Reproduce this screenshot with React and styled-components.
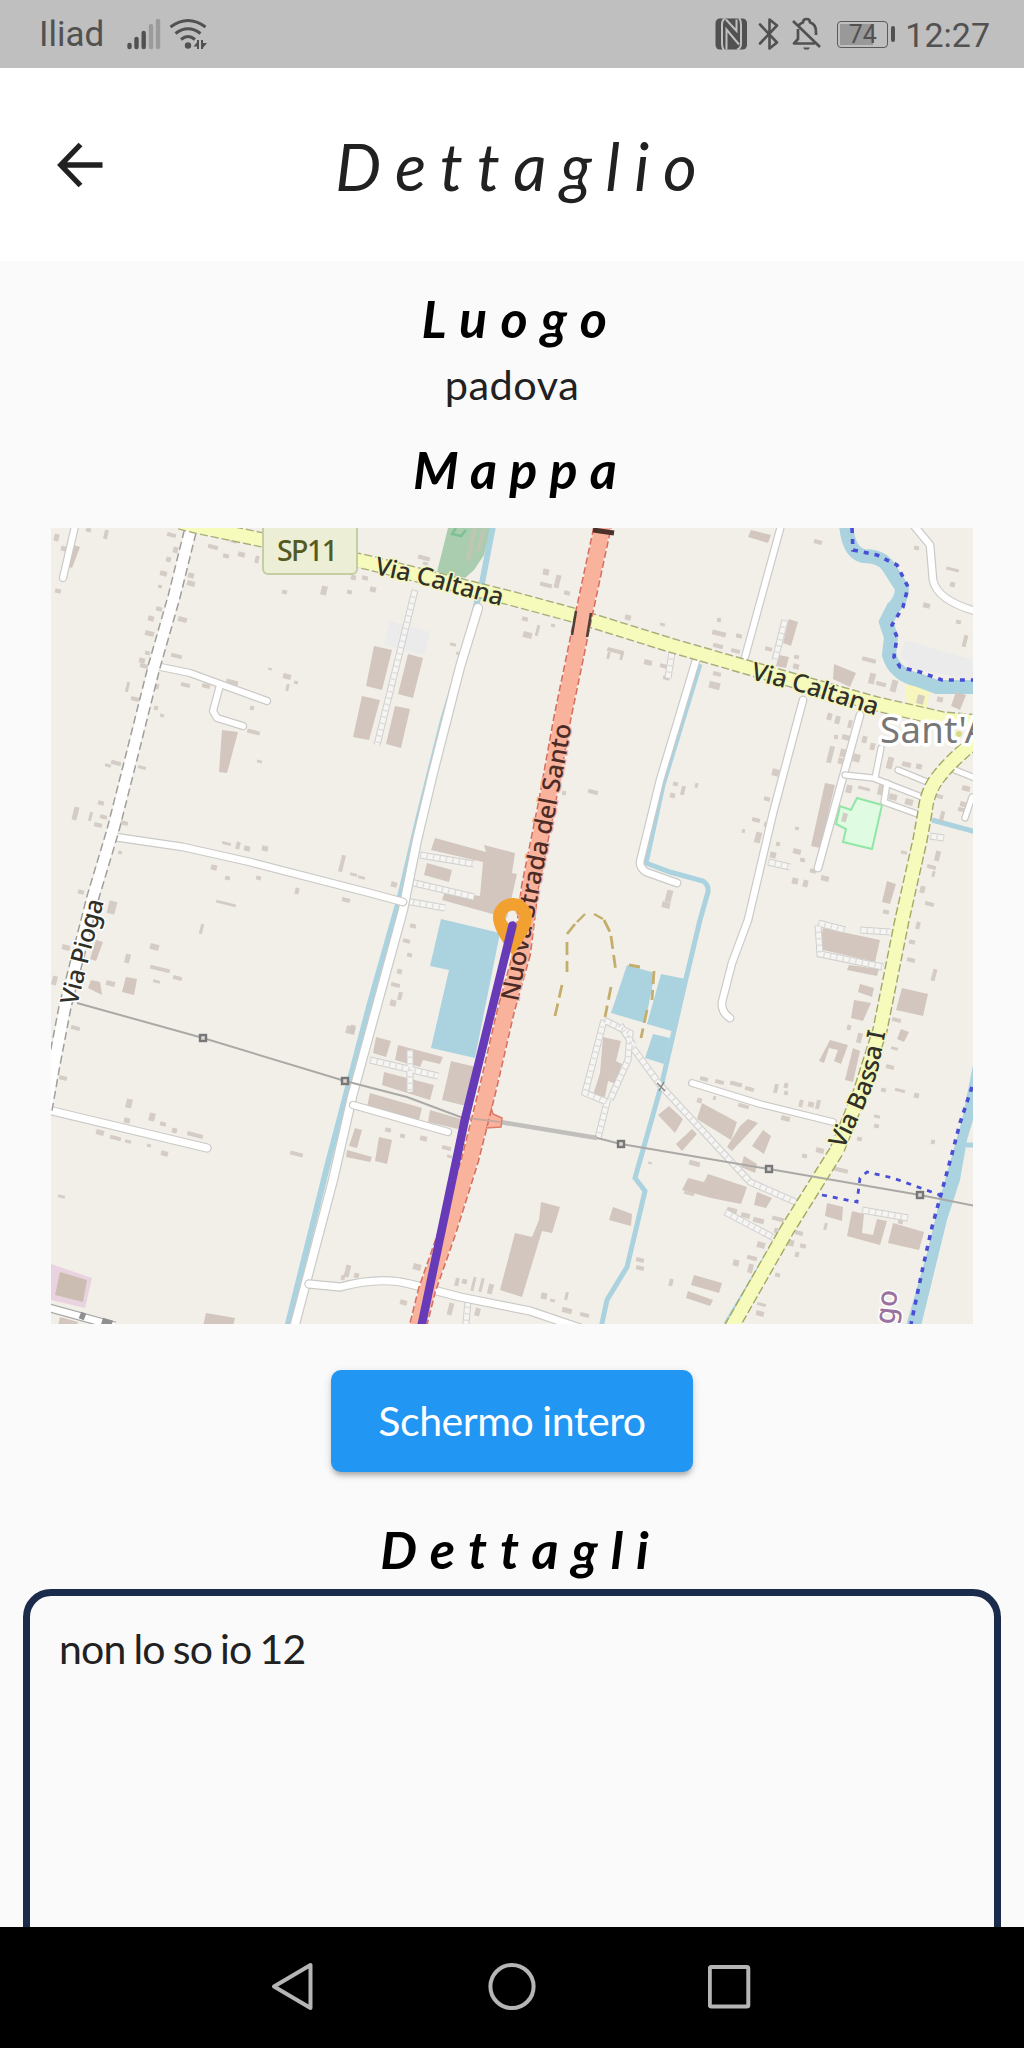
import React from "react";
import styled, { createGlobalStyle } from "styled-components";

const Global = createGlobalStyle`
  * { box-sizing: border-box; }
  html, body { margin: 0; padding: 0; background: #fafafa; }
  body { font-family: Lato, "Liberation Sans", sans-serif; color: #212121; }
  svg { display: block; flex: none; }
`;

const Screen = styled.div`
  width: 1024px;
  height: 2048px;
  overflow: hidden;
  display: flex;
  flex-direction: column;
  background: #fafafa;
`;

const StatusBar = styled.header`
  flex: none;
  height: 68px;
  padding: 0 34px 0 39px;
  display: flex;
  align-items: center;
  justify-content: space-between;
  background: #bfbfbf;
  color: #515151;
  font-family: Roboto, "Liberation Sans", sans-serif;
  font-size: 34px;
`;

const StatusGroup = styled.div`
  display: flex;
  align-items: center;
  gap: ${(p) => p.$gap}px;
`;

const StatusText = styled.span`
  line-height: 68px;
  padding-top: 2px;
  width: ${(p) => (p.$width ? `${p.$width}px` : "auto")};
  font-size: ${(p) => p.$size || 34}px;
  letter-spacing: ${(p) => p.$spacing || 0}px;
  white-space: nowrap;
`;

const AppBar = styled.div`
  flex: none;
  height: 193px;
  padding: 2px 48px 0 54px;
  display: grid;
  grid-template-columns: 60px 1fr 60px;
  align-items: center;
  background: #ffffff;
`;

const BackButton = styled.button`
  padding: 0 0 2px;
  border: 0;
  background: none;
  width: 52px;
`;

const Title = styled.h1`
  margin: 0;
  padding-left: 16px;
  text-align: center;
  white-space: nowrap;
  font-size: 65px;
  line-height: 78px;
  font-style: italic;
  font-weight: 400;
  letter-spacing: 13.9px;
`;

const Content = styled.main`
  flex: 1;
  min-height: 0;
  overflow: hidden;
  display: flex;
  flex-direction: column;
  align-items: center;
  padding-top: 26px;
`;

const Heading = styled.h2`
  flex: none;
  margin: ${(p) => p.$top || 0}px 0 0;
  padding-left: 18px;
  color: #000;
  font-size: 52px;
  line-height: 62px;
  font-style: italic;
  font-weight: 700;
  letter-spacing: ${(p) => p.$spacing || 13}px;
`;

const Place = styled.p`
  flex: none;
  margin: 10px 0 0;
  font-size: 41.5px;
  line-height: 50px;
  letter-spacing: 0.5px;
`;

const MapFrame = styled.div`
  flex: none;
  margin-top: 28px;
  width: 922px;
  height: 796px;
  overflow: hidden;
  background: #f2efe9;
`;

const FullScreenButton = styled.button`
  flex: none;
  margin-top: 46px;
  width: 362px;
  height: 102px;
  padding: 0;
  border: 0;
  border-radius: 10px;
  background: #2196f3;
  color: #fff;
  font: 400 41px/50px Lato, sans-serif;
  letter-spacing: -0.45px;
  word-spacing: -1px;
  box-shadow: 0 5px 5px -2px rgba(0, 0, 0, 0.22), 0 3px 8px rgba(0, 0, 0, 0.16);
`;

const DetailBox = styled.section`
  flex: none;
  align-self: stretch;
  margin: 9px 23px 0;
  height: 480px;
  padding: 28px 29px;
  border: 7px solid #1b2b4b;
  border-radius: 28px;
  font-size: 41px;
  line-height: 50px;
  letter-spacing: -0.8px;
  word-spacing: -1.8px;
`;

const NavBar = styled.nav`
  flex: none;
  height: 121.5px;
  display: flex;
  align-items: center;
  justify-content: center;
  gap: 172px;
  background: #000;
`;

const MapText = styled.text`
  font-family: "Noto Sans", "Open Sans", sans-serif;
  font-size: ${(p) => p.$size || 25}px;
  font-weight: ${(p) => p.$weight || 500};
  fill: ${(p) => p.$fill || "#303028"};
  stroke: ${(p) => p.$halo || "none"};
  stroke-width: ${(p) => p.$haloWidth || 3}px;
  stroke-linejoin: round;
  paint-order: stroke;
`;

const viaPioga = "M193 520L174 597L154 667L133 751L113 830L93 897L65 1007L53 1070L46 1110";
const caltana = "M180 522L200 527L263 540L370 563L510 598L577 616L670 645L753 669L877 704L943 719L978 722";
const bassa = "M974 742Q950 762 940 775Q927 790 925 812L920 840L902 920L890 980L880 1030L860 1093L837 1150L787 1230L730 1330";
const santo = "M604 520L582 623L562 720L547 803L530 887L522 953L506 1010L488 1088L470 1160L448 1230L427 1290L417 1330";

const whiteRoads = [
  [8, "M478 608L460 667L433 773L417 840L403 910L352 1097L333 1180L294 1328"],
  [6, "M156 666L190 673L220 684L267 701M220 685L213 711L217 718L243 726"],
  [6.5, "M115 837L183 847L250 862L370 893L403 902"],
  [6, "M75 526L63 578"],
  [7, "M48 1110L207 1148"],
  [6.5, "M697 657L660 780L640 862Q640 868 646 872L677 883"],
  [6, "M782 522L745 657"],
  [6.5, "M803 700L773 813L748 920L732 963L722 1002Q721 1012 730 1018"],
  [6.5, "M860 715L818 868"],
  [5, "M845 775L873 778L922 797M881 748L875 778M887 783L884 802L920 815M898 770L927 782M950 768L975 778M972 797L965 818"],
  [6.5, "M911 522L930 545L933 580Q937 600 975 611"],
  [7, "M309 1284L340 1287Q380 1276 410 1284L460 1297L530 1311L580 1328"],
  [6, "M353 1105L448 1132"],
  [5.5, "M692 1083L760 1104L833 1122"],
];

const serviceRoads = [
  "M415 590L377 745",
  "M420 855L474 864M410 882L474 897M400 900L445 908",
  "M604 1020L585 1093L607 1102L598 1138M604 1020L630 1033L628 1060L610 1100M620 1025L633 1045M633 1048L660 1085L750 1182L800 1204",
  "M370 1060L438 1076M410 1050L410 1092",
  "M818 925L820 954L883 967M818 923L845 930M860 930L890 932",
  "M785 620L775 660M672 652L668 678M862 1210L908 1218M725 1212L778 1240M768 862L790 867M930 836L944 838",
  "M468 1300L466 1324",
];

const buildings = [
  "374 646 392 650 382 690 366 686", "408 654 423 658 413 698 398 694",
  "362 696 380 700 369 740 353 737", "395 706 410 709 401 748 386 744",
  "435 838 486 852 484 845 515 853 512 873 517 874 507 918 442 900 445 891 480 896 483 862 431 850",
  "427 863 452 870 449 882 424 875",
  "222 730 238 732 227 773 219 772",
  "376 1037 391 1041 386 1057 373 1053", "398 1045 443 1057 440 1064 423 1060 420 1067 395 1060",
  "384 1072 434 1085 430 1100 382 1085", "451 1061 476 1067 466 1106 442 1100 448 1075",
  "370 1093 422 1108 419 1120 367 1107", "430 1110 464 1120 458 1129 428 1122",
  "379 1137 392 1140 387 1164 375 1161", "355 1128 362 1130 357 1148 349 1146",
  "347 1150 372 1157 370 1162 346 1157",
  "541 1202 560 1207 552 1233 542 1231 522 1297 500 1290 515 1233 532 1237 539 1220",
  "613 1207 632 1214 631 1226 609 1220",
  "603 1037 621 1041 616 1061 622 1064 616 1084 608 1081 605 1097 593 1095 600 1073",
  "669 1106 683 1119 675 1133 658 1115", "692 1129 697 1134 682 1151 676 1144",
  "702 1103 737 1122 731 1140 697 1119", "748 1119 758 1123 732 1151 727 1147 740 1126",
  "763 1130 771 1136 764 1154 752 1146",
  "688 1178 704 1182 708 1174 747 1187 741 1204 711 1198 682 1190",
  "757 1192 772 1198 766 1208 754 1205", "744 1156 757 1164 755 1173 741 1167",
  "823 928 880 940 875 962 819 949", "849 965 879 969 877 976 847 970",
  "902 988 928 994 923 1016 896 1010", "860 984 874 988 872 997 858 992",
  "854 1000 871 1003 863 1021 851 1018", "830 1040 848 1045 841 1064 834 1061 838 1050 829 1048 824 1063 819 1061",
  "853 1048 860 1051 853 1082 845 1080", "901 1029 909 1032 904 1042 897 1039",
  "827 1203 843 1207 842 1221 825 1216",
  "852 1211 864 1214 862 1233 873 1235 877 1219 887 1221 880 1245 847 1236",
  "893 1223 924 1232 919 1250 888 1243",
  "694 1275 722 1283 719 1293 691 1285", "688 1291 713 1300 710 1306 686 1298",
  "751 530 771 535 768 543 748 537", "834 664 856 673 850 687 833 679",
  "825 783 835 785 820 848 811 846", "789 619 798 622 791 646 783 643",
  "956 692 966 695 960 710 951 706", "887 881 896 884 890 904 882 902",
  "126 977 137 979 134 995 122 992", "91 980 100 982 102 995 88 988",
  "96 940 103 942 96 961 90 959", "74 545 80 547 72 568 67 566",
  "206 1313 235 1318 233 1326 203 1326", "60 1317 78 1322 76 1328 58 1326",
  "779 655 789 657 786 668 776 666",
];

const specks = [
  [54,534,5,7],[61,546,5,5],[104,530,4,9],[86,528,5,4],[55,589,6,4],[167,533,9,4],[173,547,5,6],[166,557,5,5],[188,573,6,5],
  [160,571,7,5],[158,585,4,3],[187,581,8,5],[156,607,6,4],[148,616,6,5],[178,617,9,5],[145,631,9,5],[171,654,11,4],[145,651,5,4],
  [139,658,6,5],[140,664,8,4],[126,682,3,10],[155,684,4,5],[131,697,8,4],[154,706,4,4],[160,714,4,3],[181,683,9,4],[202,684,8,4],
  [226,680,12,5],[268,668,4,2],[283,674,8,5],[286,684,3,7],[294,681,4,3],[247,730,13,4],[257,760,5,3],[250,706,4,4],[111,761,10,4],
  [105,764,6,3],[138,766,8,3],[98,801,6,4],[73,807,5,13],[89,812,3,9],[100,815,7,4],[94,823,8,4],[120,821,8,4],[118,851,4,3],
  [222,842,9,3],[236,842,4,7],[244,846,6,5],[262,846,6,5],[211,865,6,5],[225,876,5,4],[256,876,5,4],[295,888,4,6],[340,855,4,17],
  [350,873,7,3],[358,876,7,3],[342,898,8,4],[216,902,20,3],[78,890,6,4],[108,901,8,13],[52,976,5,9],[62,945,8,5],[106,981,9,5],
  [125,954,5,9],[150,944,9,6],[150,967,20,4],[173,976,9,4],[153,980,7,3],[200,924,3,10],[71,1026,9,4],[59,1076,8,4],[126,1099,6,9],
  [124,1118,6,5],[149,1113,6,8],[160,1122,6,4],[172,1128,5,5],[187,1133,16,4],[96,1130,8,5],[110,1136,11,4],[125,1140,6,3],
  [147,1144,4,3],[161,1151,7,5],[290,1152,13,4],[58,1195,7,3],[346,1026,9,8],[345,1265,5,12],[341,1275,4,5],[354,1273,5,5],
  [208,545,10,4],[223,554,6,4],[238,552,7,5],[230,539,7,4],[255,556,4,7],[282,590,5,4],[321,586,6,9],[347,590,5,4],[351,575,5,5],
  [362,576,6,4],[370,587,6,5],[418,556,12,4],[423,562,5,3],[543,569,6,6],[555,575,5,13],[540,583,12,4],[564,591,6,4],[522,617,6,4],
  [523,632,9,6],[536,625,3,11],[551,624,4,3],[625,615,6,5],[607,649,17,4],[607,652,3,7],[620,653,3,7],[660,623,5,3],[644,660,8,5],
  [660,664,7,4],[663,676,7,4],[588,790,10,4],[562,791,4,4],[450,643,6,3],[456,652,5,3],[391,882,6,5],[410,924,6,4],[403,939,7,4],
  [407,953,5,4],[397,969,5,5],[391,983,9,4],[398,992,4,8],[390,1000,6,6],[350,1025,5,8],[385,1128,6,4],[400,1134,5,4],[420,1136,7,5],
  [442,1146,9,4],[447,1155,5,3],[413,1264,8,6],[400,1300,7,5],[455,1278,4,8],[462,1279,5,5],[472,1277,3,14],[480,1278,3,14],
  [488,1284,5,10],[448,1303,5,12],[475,1308,5,8],[541,1293,6,6],[550,1299,5,3],[565,1292,3,8],[562,1308,10,5],[580,1313,9,4],
  [636,1258,8,4],[636,1266,8,4],[648,1162,4,2],[666,890,6,12],[662,902,8,6],[814,540,8,4],[717,618,4,4],[712,631,14,5],[736,634,6,4],
  [713,644,10,4],[731,649,9,4],[765,647,7,4],[794,655,5,4],[793,664,6,5],[709,682,11,7],[713,672,8,4],[862,658,14,4],[869,673,6,11],
  [876,682,10,4],[891,680,6,12],[917,695,7,9],[937,697,6,5],[827,713,5,7],[835,716,5,8],[848,720,4,8],[834,735,4,4],[842,735,8,5],
  [828,746,5,17],[840,749,6,8],[853,754,7,8],[838,758,6,6],[862,736,5,7],[870,743,5,7],[887,757,6,12],[902,762,9,5],[916,764,6,5],
  [846,785,6,8],[858,787,12,3],[878,784,5,11],[889,794,8,6],[905,799,8,6],[921,799,8,5],[932,794,11,4],[962,786,8,5],[960,802,8,5],
  [958,808,10,4],[940,811,4,11],[772,769,7,7],[764,797,6,4],[752,818,8,4],[764,822,4,5],[755,832,6,11],[742,829,3,4],[776,842,4,4],
  [770,852,6,6],[793,849,8,5],[800,858,5,4],[810,869,6,4],[821,876,8,5],[792,878,6,6],[803,880,5,7],[795,827,4,3],[842,813,5,9],
  [673,782,5,4],[681,786,4,9],[670,793,5,5],[695,783,3,5],[923,603,7,5],[946,568,13,3],[950,582,5,5],[914,546,5,4],[956,620,5,4],
  [963,635,4,12],[901,851,6,3],[935,851,5,10],[927,865,9,4],[932,871,3,6],[920,886,5,7],[925,902,9,4],[883,910,6,4],[916,922,4,7],
  [909,940,6,4],[907,958,8,4],[932,969,4,12],[892,1018,9,4],[857,1033,5,10],[847,1025,4,5],[886,1065,8,4],[891,1047,7,3],[881,1088,5,4],
  [895,1089,10,3],[914,1093,5,5],[874,1115,6,3],[874,1124,5,4],[857,1137,5,4],[931,1140,4,4],[799,1100,4,7],[808,1102,6,5],
  [816,1100,4,9],[781,1116,9,5],[774,1084,4,9],[784,1083,4,5],[784,1091,4,4],[700,1077,8,4],[715,1080,9,4],[730,1082,12,4],
  [745,1087,9,4],[697,1098,5,5],[738,1104,11,4],[713,1096,3,4],[802,1154,5,4],[833,1168,15,4],[816,1148,8,5],[727,1208,10,5],
  [741,1213,9,5],[753,1218,11,5],[772,1217,12,4],[774,1229,12,5],[788,1240,6,6],[795,1252,4,5],[800,1244,6,4],[795,1231,8,4],
  [757,1242,8,6],[747,1256,10,4],[748,1264,5,9],[733,1260,6,6],[669,1279,4,7],[775,1273,5,4],[757,1303,9,3],[756,1311,8,5],
  [684,1192,10,3],[689,1161,11,5],[824,1223,3,7],[898,1220,5,4],
];

function OsmMap() {
  return (
    <svg width="922" height="796" viewBox="51 528 922 796">
      <defs>
        <path id="lblCaltanaA" d="M374 574L420 584L460 595L520 611" />
        <path id="lblCaltanaB" d="M750 679L800 692L845 706L900 723" />
        <path id="lblSanto" d="M518 1002L540 885L557 803L574 713" />
        <path id="lblPioga" d="M77 1006L91 950L108 886" />
        <path id="lblBassa" d="M843 1150Q869 1101 878 1070L889 1015" />
      </defs>

      <path d="M390 621L430 632L424 655L384 645Z" fill="#ecebec" />
      <path d="M905 640L973 660L973 680L910 668L900 655Z" fill="#ecebec" />
      <path d="M448 528L491 528L484 555L474 570L465 578L437 572Z" fill="#aacdb0" />
      <path d="M475 528L468 560M484 529L478 552" stroke="#c1c6b4" strokeWidth="4" />
      <path d="M456 528L452 534L461 536L466 530" stroke="#7fc195" strokeWidth="2.5" fill="none" />
      <path d="M905 684L930 688L927 708L907 706Z" fill="#f6f6bd" />
      <path d="M857 798L882 805L872 849L843 842L846 829L836 824L840 806L851 810Z" fill="#dffce2" stroke="#8fe6a5" strokeWidth="2" />
      <path d="M51 1264L92 1278L85 1308L51 1300Z" fill="#ead3e0" />
      <path d="M60 1272L87 1280L83 1302L55 1295Z" fill="#cbbdb1" />

      <g fill="#aad3df">
        <path d="M441 919L500 933L475 1058L431 1048L449 970L430 966Z" />
        <path d="M627 965L655 973L645 1023L611 1013Z" />
        <path d="M661 974L686 979L675 1032L647 1024Z" />
        <path d="M653 1034L670 1038L664 1064L645 1058Z" />
        <path d="M973 1065L962 1120L943 1187L927 1253L906 1326L921 1326L947 1220L960 1180L967 1140L973 1120Z" />
      </g>
      <g fill="none" stroke="#aad3df">
        <path d="M493 526L482 583L468 637L443 720L418 820L400 897L370 1003L327 1167L287 1328" strokeWidth="6" />
        <path d="M846 524Q848 552 863 556Q881 556 888 566L902 588Q902 600 893 608L886 622L891 637L889 655Q895 675 918 680L937 687L976 687" strokeWidth="14" />
        <path d="M700 664L663 785L646 863L670 872L703 881Q709 885 708 892L700 920L685 983L662 1083L635 1178L645 1191L627 1267L607 1300L601 1328" strokeWidth="5" />
        <path d="M932 820L976 832M966 1145L976 1145M786 1224L726 1324" strokeWidth="5" />
      </g>

      <g fill="#d2c6be">
        {buildings.map((points) => <polygon key={points} points={points} />)}
      </g>
      <g fill="#cfc5be">
        {specks.map(([x, y, w, h], i) => (
          <rect key={i} x={x} y={y} width={w} height={h} opacity="0.85" transform={`rotate(14 ${x + w / 2} ${y + h / 2})`} />
        ))}
      </g>

      <g fill="none">
        {serviceRoads.map((d) => (
          <g key={d}>
            <path d={d} stroke="#cfcfcd" strokeWidth="7" />
            <path d={d} stroke="#f6f5f4" strokeWidth="5" />
            <path d={d} stroke="#dededb" strokeWidth="5" strokeDasharray="1.5 5" />
          </g>
        ))}
        {whiteRoads.map(([w, d]) => (
          <g key={d} strokeLinejoin="round" strokeLinecap="round">
            <path d={d} stroke="#cbcac7" strokeWidth={w + 2.4} />
            <path d={d} stroke="#ffffff" strokeWidth={w} />
          </g>
        ))}
        <path d={viaPioga} stroke="#9f9e9c" strokeWidth="13.5" strokeDasharray="8 4" />
        <path d={viaPioga} stroke="#fff" strokeWidth="10.5" />
        <path d="M46 1307L115 1326" stroke="#a6a6a6" strokeWidth="9" />
        <path d="M46 1307L115 1326" stroke="#fff" strokeWidth="6.5" />
        <path d="M80 1315L85 1317M102 1321L112 1324" stroke="#8f8f8f" strokeWidth="7" />

        {[["#a9ae78", 15.5, caltana], ["#a2a860", 15.5, bassa]].map(([c, w, d]) => (
          <g key={c}>
            <path d={d} stroke={c} strokeWidth={w} strokeDasharray="8 3" />
            <path d={d} stroke="#f6fabb" strokeWidth={w - 2.8} />
          </g>
        ))}

        <path d="M77 1003L203 1038L345 1081L407 1097L463 1118L500 1122L597 1138L621 1144L769 1169L920 1195L976 1206" stroke="#aaa9a6" strokeWidth="2" />
        <path d="M500 1122L597 1138" stroke="#c0bfbc" strokeWidth="4.5" />
        <path d="M490 1104L493 1114L502 1118L501 1127L486 1128Z" fill="#f9b29c" stroke="#dc7a6c" strokeWidth="1.5" />
        <path d={santo} stroke="#d66f62" strokeWidth="18.5" strokeDasharray="7 3" />
        <path d={santo} stroke="#f9b29c" strokeWidth="15.5" />
        <path d="M460 1117L500 1122" stroke="#c9a79a" strokeWidth="2" />
        <path d="M576 611L572 635M591 613L587 637" stroke="#4c4038" strokeWidth="2.5" />
        <path d="M593 530L614 533" stroke="#4c302a" strokeWidth="5" />

        <path d="M567 934L575 924M567 942V972M562 985L555 1016M604 920L610 932M611 936L616 972M611 987L605 1017M629 965L640 967M654 971L652 1000M647 1010L641 1038" stroke="#c4ae6c" strokeWidth="2.8" strokeDasharray="13 6" />
        <path d="M577 922L585 914M594 914L603 919" stroke="#c4ae6c" strokeWidth="2.4" />
        <g stroke="#494ed7" strokeWidth="3.6" strokeDasharray="5 6">
          <path d="M852 528L853 550L877 555L897 565L908 587L903 607L892 625L897 637L894 657L900 667L920 672L942 680L973 680" />
          <path d="M972 1087L960 1123L953 1150L943 1187L932 1227L923 1267L911 1324" />
          <path d="M822 1195L857 1202L860 1178L867 1172L893 1178L940 1195" strokeWidth="2.8" />
        </g>
      </g>
      <g fill="#d8d6d0" stroke="#777" strokeWidth="2.4">
        {[[203, 1038], [345, 1081], [621, 1144], [769, 1169], [920, 1195]].map(([x, y]) => (
          <rect key={x} x={x - 3} y={y - 3} width="6" height="6" />
        ))}
      </g>
      <path d="M657 1083L665 1091M664 1082L659 1091" stroke="#888" strokeWidth="1.5" />

      <rect x="263" y="520" width="94" height="54" rx="5" fill="#ecefd5" stroke="#c5cda2" strokeWidth="2" />
      <MapText x="277" y="561" $size={28.5} $fill="#545a20" textLength="61">SP11</MapText>
      <MapText $halo="#f3f7be"><textPath href="#lblCaltanaA" textLength="131">Via Caltana</textPath></MapText>
      <MapText $halo="#f3f7be"><textPath href="#lblCaltanaB" textLength="131">Via Caltana</textPath></MapText>
      <MapText $halo="#f9b29c" $fill="#4b2b25"><textPath href="#lblSanto" textLength="282">Nuova Strada del Santo</textPath></MapText>
      <MapText $halo="#ffffff"><textPath href="#lblPioga" textLength="108">Via Pioga</textPath></MapText>
      <MapText $halo="#f3f7be"><textPath href="#lblBassa" textLength="126">Via Bassa I</textPath></MapText>
      <MapText x="880" y="743" $size={36.5} $weight={400} $fill="#777777" $halo="#fff" $haloWidth={7} textLength="108">Sant'A</MapText>
      <circle cx="959" cy="734" r="3" fill="#d5dc83" />
      <MapText $size={28} $fill="#9a729e" $halo="#fff" transform="translate(894 1325) rotate(-84)">go</MapText>

      <path
        d="M512.5 898C501.700 898 493 906.700 493 917.500C493 932.100 512.500 955 512.500 955S532 932.100 532 917.500C532 906.700 523.300 898 512.500 898ZM512.500 924.500A7 7 0 1 1 512.500 910.500A7 7 0 0 1 512.500 924.500Z"
        fill="#f2a02f"
        fillRule="evenodd"
      />
      <path d="M512.500 925.500L465 1119L421 1328" fill="none" stroke="#673ab7" strokeWidth="8.500" strokeLinecap="round" strokeLinejoin="round" />
    </svg>
  );
}

const SignalIcon = () => (
  <svg width="34" height="32" viewBox="127 18 34 32" strokeWidth="4.400" strokeLinecap="round" fill="none">
    <path d="M129.500 45V47M136.500 39V47M143.700 33V47" stroke="#515151" />
    <path d="M151 26V47M158 21V47" stroke="#9b9b9b" />
  </svg>
);

const WifiIcon = () => (
  <svg width="39" height="32" viewBox="169 18 39 32" fill="none" stroke="#515151" strokeWidth="3">
    <path d="M170.500 27Q188 14 205.500 27M175.500 33.500Q188 24 200.500 33.500M181 39.500Q188 33.500 195 39.500" />
    <circle cx="188" cy="45.500" r="3.200" fill="#515151" stroke="none" />
    <path d="M198 40V49M202 40V49" strokeWidth="2" />
    <path d="M198 41L193.500 46.500H198ZM202 43H207L202 49Z" fill="#515151" stroke="none" />
  </svg>
);

const NfcIcon = () => (
  <svg width="32" height="32" viewBox="717 18.500 32 32" fill="none">
    <rect x="717.500" y="19" width="31.500" height="31" rx="4.500" fill="#515151" />
    <path d="M727.500 19Q724 20 724 25V44Q724 48 726 51M728 20L738.500 31.500V20M728.500 50V30L741 45M739 50Q743 49 743 44V25Q743 21 741 18" stroke="#bfbfbf" strokeWidth="2" />
  </svg>
);

const BluetoothIcon = () => (
  <svg width="22" height="34" viewBox="760 17.500 22 34" fill="none" stroke="#515151" strokeWidth="2.600" strokeLinejoin="round" strokeLinecap="round">
    <path d="M762 25L779 43L771.500 49V20L779 26L762 44" />
  </svg>
);

const BellOffIcon = () => (
  <svg width="31" height="34" viewBox="792 18 31 34" fill="none" stroke="#515151" strokeWidth="2.700">
    <path d="M794 22L821 48M799 30V40L795 44.500H816M800 26Q802 24 804 23.500Q804 20 807.500 20Q811 20 811 23.500Q817 25 817 33V36" strokeLinejoin="round" />
    <path d="M804 48.500H811L809.500 50.500H805.500Z" fill="#515151" stroke="none" />
  </svg>
);

const BatteryBody = styled.div`
  width: 51px;
  height: 27px;
  display: flex;
  align-items: center;
  justify-content: center;
  border: 1.5px solid #5a5a5a;
  border-radius: 4px;
  background: linear-gradient(90deg, #999 74%, transparent 74%) 2px 2px / calc(100% - 4px) calc(100% - 4px) no-repeat;
  font-size: 25px;
  line-height: 25px;
`;

const BatteryNub = styled.i`
  width: 4px;
  height: 16px;
  border-radius: 2px;
  background: #515151;
`;

export default function App() {
  return (
    <Screen>
      <Global />
      <StatusBar>
        <StatusGroup $gap={8}>
          <StatusText $width={80} $size={35}>Iliad</StatusText>
          <SignalIcon />
          <WifiIcon />
        </StatusGroup>
        <StatusGroup $gap={15}>
          <StatusGroup $gap={11}>
            <NfcIcon />
            <BluetoothIcon />
            <BellOffIcon />
          </StatusGroup>
          <StatusGroup $gap={10}>
            <StatusGroup $gap={3}>
              <BatteryBody>74</BatteryBody>
              <BatteryNub />
            </StatusGroup>
            <StatusText>12:27</StatusText>
          </StatusGroup>
        </StatusGroup>
      </StatusBar>
      <AppBar>
        <BackButton aria-label="Indietro">
          <svg width="52" height="52" viewBox="0 0 52 52" fill="none" stroke="#212121" strokeWidth="5.400">
            <path d="M48.500 26H9M26.500 5.500L6.800 26L26.500 46.500" />
          </svg>
        </BackButton>
        <Title>Dettaglio</Title>
      </AppBar>
      <Content>
        <Heading $spacing={13.4}>Luogo</Heading>
        <Place>padova</Place>
        <Heading $top={29} $spacing={12.2}>Mappa</Heading>
        <MapFrame>
          <OsmMap />
        </MapFrame>
        <FullScreenButton>Schermo intero</FullScreenButton>
        <Heading $top={46}>Dettagli</Heading>
        <DetailBox>non lo so io 12</DetailBox>
      </Content>
      <NavBar>
        <svg width="46" height="52" viewBox="270 1962 46 52" fill="none" stroke="#b5b5b5" strokeWidth="4" strokeLinejoin="round">
          <path d="M310.500 1966V2009L274 1987.500Z" />
        </svg>
        <svg width="48" height="52" viewBox="488 1962 48 52" fill="none" stroke="#b5b5b5" strokeWidth="4">
          <circle cx="512" cy="1987.500" r="21.600" />
        </svg>
        <svg width="46" height="52" viewBox="708 1962 46 52" fill="none" stroke="#b5b5b5" strokeWidth="4">
          <rect x="709.800" y="1968" width="38.500" height="39.500" rx="1.500" />
        </svg>
      </NavBar>
    </Screen>
  );
}
